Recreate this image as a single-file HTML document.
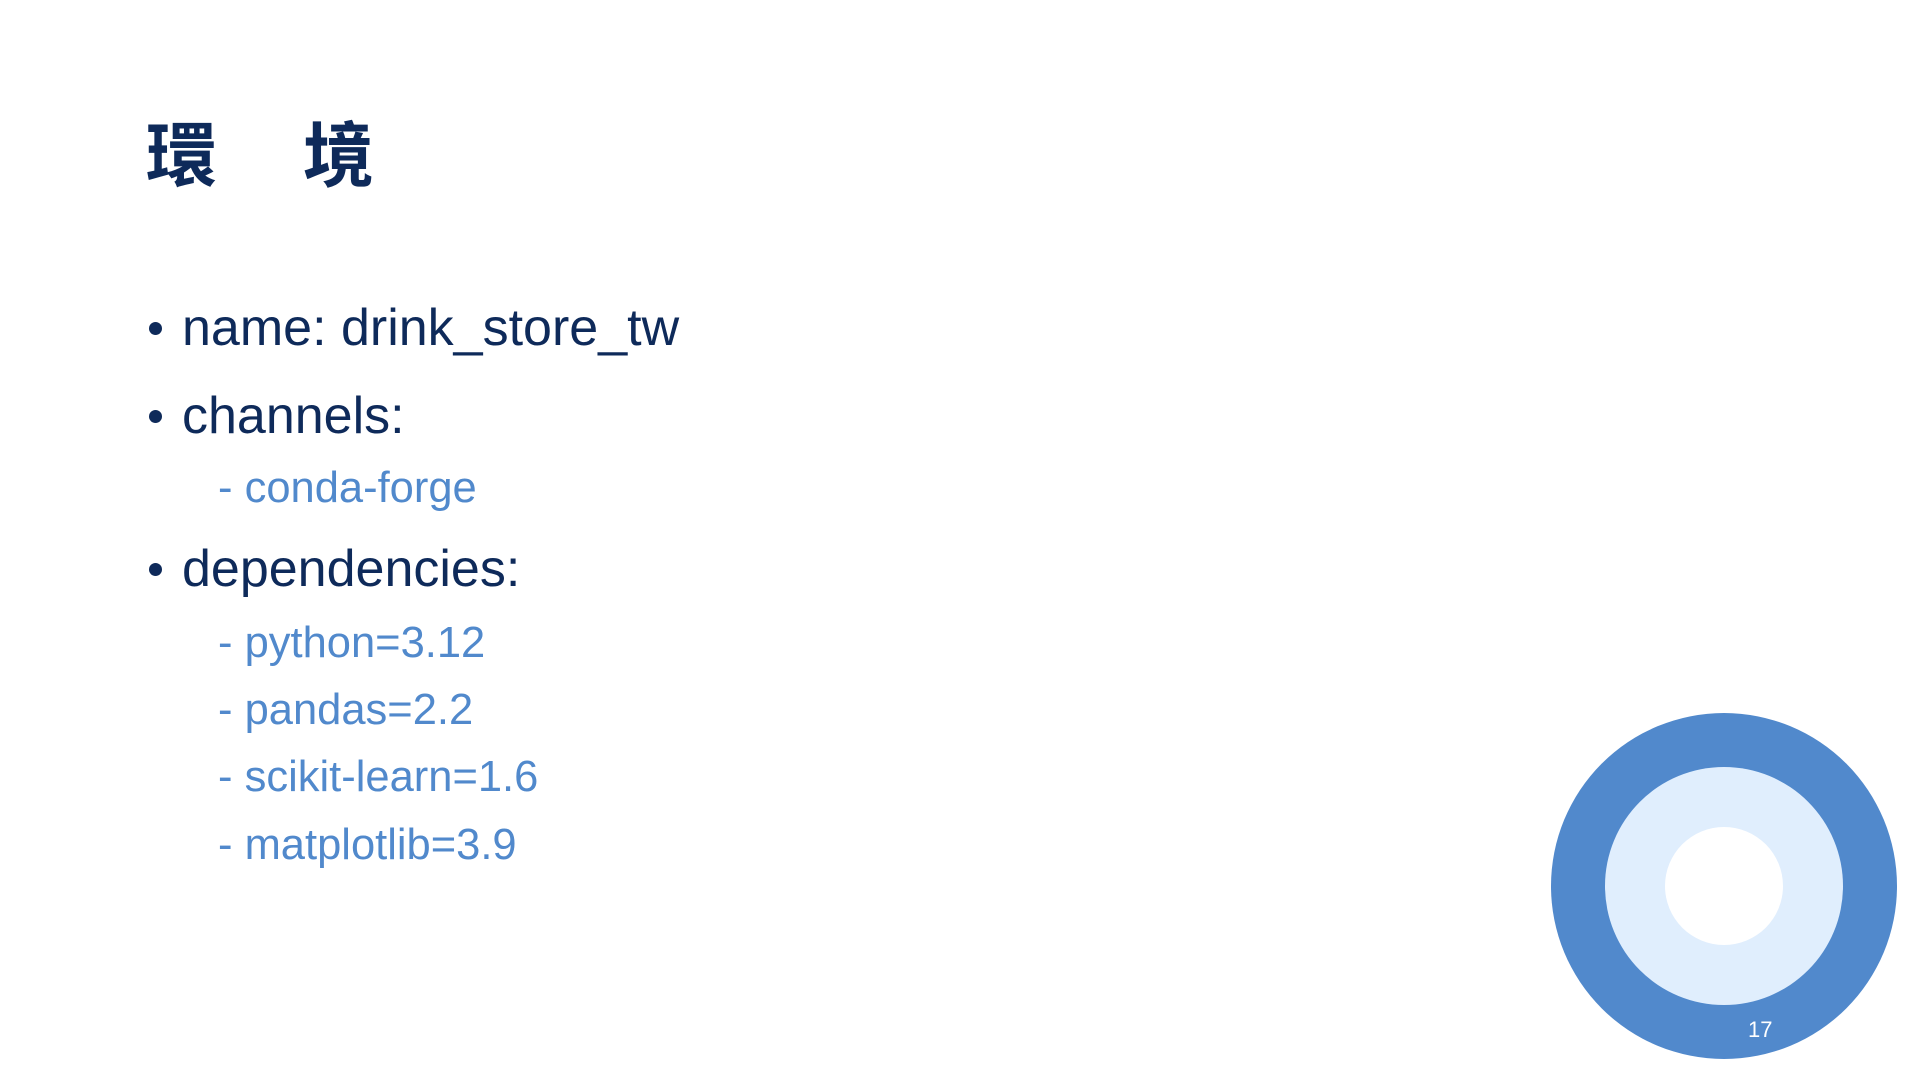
<!DOCTYPE html>
<html><head><meta charset="utf-8"><style>
body{margin:0;width:1920px;height:1080px;background:#fff;position:relative;overflow:hidden;font-family:"Liberation Sans","Noto Sans CJK TC",sans-serif}
.t{position:absolute;white-space:nowrap;line-height:1}
.h{left:146px;top:116px;font-size:71px;font-weight:bold;color:#0e2a5a;font-family:"Noto Sans CJK TC",sans-serif;letter-spacing:7.5px}
.b{color:#0e2a5a;font-size:52px}
.s{color:#5189cc;font-size:43.5px}
.dot{position:absolute;width:13px;height:13px;border-radius:50%;background:#0e2a5a}
</style></head><body>
<div class="t h">環　境</div>
<div class="dot" style="left:149px;top:322px"></div>
<div class="dot" style="left:149px;top:410px"></div>
<div class="dot" style="left:149px;top:563px"></div>
<div class="t b" style="left:182px;top:302px">name: drink_store_tw</div>
<div class="t b" style="left:182px;top:390px">channels:</div>
<div class="t s" style="left:218px;top:467px">- conda-forge</div>
<div class="t b" style="left:182px;top:543px">dependencies:</div>
<div class="t s" style="left:218px;top:622px">- python=3.12</div>
<div class="t s" style="left:218px;top:689px">- pandas=2.2</div>
<div class="t s" style="left:218px;top:756px">- scikit-learn=1.6</div>
<div class="t s" style="left:218px;top:824px">- matplotlib=3.9</div>
<svg style="position:absolute;left:0;top:0" width="1920" height="1080">
<circle cx="1724" cy="886" r="173" fill="#5189cc"/>
<circle cx="1724" cy="886" r="119" fill="#e0eefd"/>
<circle cx="1724" cy="886" r="59" fill="#fff"/>
<text x="1748" y="1037" font-size="22" fill="#fff" font-family="Liberation Sans">17</text>
</svg>
</body></html>
